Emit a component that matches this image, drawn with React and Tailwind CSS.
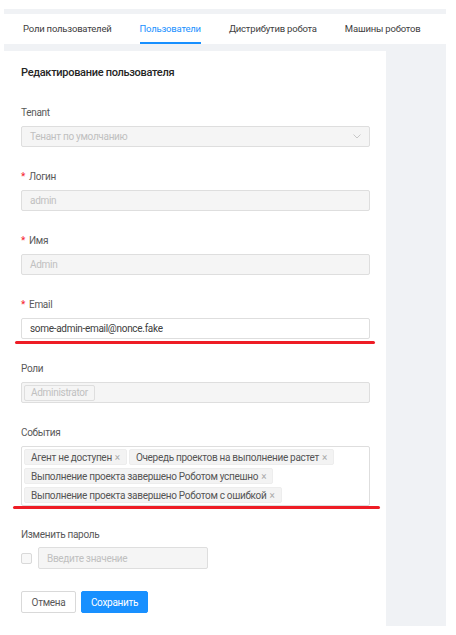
import React from "react";

const font = { fontFamily: 'Roboto, "Noto Sans", sans-serif' };

function Label({ children, required }) {
  return (
    <div className="h-[16px] flex items-center text-[10px] tracking-[-0.3px] text-[#595959] leading-[16px]">
      {required && <span className="text-[#f5222d] mr-[4px] text-[10px]">*</span>}
      {children}
    </div>
  );
}

function Tag({ children }) {
  return (
    <span className="h-[16px] flex items-center px-[6px] bg-[#f3f3f3] border border-[#ededed] rounded-[2px] text-[10px] tracking-[-0.3px] text-[#555555] whitespace-nowrap">
      {children}
      <span className="ml-[3px] text-[#aaaaaa] text-[10px]">×</span>
    </span>
  );
}

export default function App() {
  return (
    <div className="w-[456px] h-[635px] bg-white overflow-hidden" style={font}>
      <div className="ml-[4px] mt-[9px] w-[442px] h-[617px] bg-[#f0f2f5] pt-[5px] flex flex-col">
        <div className="h-[30px] bg-white flex items-stretch pl-[19px] gap-[28px] text-[9.5px] tracking-[-0.2px] text-[#404040] shrink-0 whitespace-nowrap">
          <div className="flex items-center">Роли пользователей</div>
          <div className="flex items-center text-[#1890ff] relative">
            Пользователи
            <div className="absolute left-0 right-0 bottom-0 h-[2px] bg-[#1890ff]" />
          </div>
          <div className="flex items-center">Дистрибутив робота</div>
          <div className="flex items-center">Машины роботов</div>
        </div>
        <div className="mt-[7px] w-[382px] flex-1 bg-white pl-[17px] pr-[16px] pt-[13px] relative">
          <div className="h-[18px] flex items-center text-[11px] tracking-[-0.3px] font-medium text-[#262626]">
            Редактирование пользователя
          </div>

          <div className="mt-[23px]">
            <Label>Tenant</Label>
            <div className="mt-[5px] h-[21px] bg-[#f5f5f5] border border-[#dedede] rounded-[2px] flex items-center justify-between px-[8px] text-[10px] tracking-[-0.3px] text-[#c0c0c0]">
              <span>Тенант по умолчанию</span>
              <svg width="8" height="5" viewBox="0 0 8 5" fill="none">
                <path d="M0.5 0.5 L4 4 L7.5 0.5" stroke="#c8c8c8" strokeWidth="1" />
              </svg>
            </div>
          </div>

          <div className="mt-[22px]">
            <Label required>Логин</Label>
            <div className="mt-[5px] h-[21px] bg-[#f5f5f5] border border-[#dedede] rounded-[2px] flex items-center px-[8px] text-[10px] tracking-[-0.3px] text-[#c0c0c0]">
              admin
            </div>
          </div>

          <div className="mt-[22px]">
            <Label required>Имя</Label>
            <div className="mt-[5px] h-[21px] bg-[#f5f5f5] border border-[#dedede] rounded-[2px] flex items-center px-[8px] text-[10px] tracking-[-0.3px] text-[#c0c0c0]">
              Admin
            </div>
          </div>

          <div className="mt-[22px]">
            <Label required>Email</Label>
            <div className="mt-[5px] h-[21px] bg-white border border-[#dedede] rounded-[2px] flex items-center px-[8px] text-[10px] tracking-[-0.3px] text-[#404040]">
              some-admin-email@nonce.fake
            </div>
          </div>

          <div className="mt-[22px]">
            <Label>Роли</Label>
            <div className="mt-[5px] h-[21px] bg-[#f5f5f5] border border-[#dedede] rounded-[2px] flex items-center px-[2px] text-[10px] tracking-[-0.3px] text-[#c0c0c0]">
              <span className="h-[16px] flex items-center px-[6px] border border-[#dedede] rounded-[2px] bg-[#f5f5f5]">
                Administrator
              </span>
            </div>
          </div>

          <div className="mt-[22px]">
            <Label>События</Label>
            <div className="mt-[5px] bg-white border border-[#dedede] rounded-[2px] px-[2px] pt-[2px] pb-[2px] flex flex-col gap-[3px]">
              <div className="flex gap-[2px]">
                <Tag>Агент не доступен</Tag>
                <Tag>Очередь проектов на выполнение растет</Tag>
              </div>
              <div className="flex">
                <Tag>Выполнение проекта завершено Роботом успешно</Tag>
              </div>
              <div className="flex">
                <Tag>Выполнение проекта завершено Роботом с ошибкой</Tag>
              </div>
            </div>
          </div>

          <div className="mt-[21px]">
            <Label>Изменить пароль</Label>
            <div className="mt-[4px] flex items-center gap-[6px]">
              <div className="w-[11px] h-[11px] border border-[#d9d9d9] rounded-[2px] bg-[#f8f8f8]" />
              <div className="w-[170px] h-[22px] bg-[#f5f5f5] border border-[#dedede] rounded-[2px] flex items-center px-[8px] text-[10px] tracking-[-0.3px] text-[#c0c0c0]">
                Введите значение
              </div>
            </div>
          </div>

          <div className="mt-[22px] flex gap-[5px]">
            <button className="w-[55px] h-[22px] bg-white border border-[#d9d9d9] rounded-[2px] text-[10px] tracking-[-0.3px] text-[#595959]">
              Отмена
            </button>
            <button className="w-[67px] h-[22px] bg-[#1890ff] border border-[#1890ff] rounded-[2px] text-[10px] tracking-[-0.3px] text-white">
              Сохранить
            </button>
          </div>

          <div className="absolute left-[11px] top-[290px] w-[360px] h-[3px] rounded-full bg-[#ee1c25]" />
          <div className="absolute left-[9px] top-[455px] w-[367px] h-[3px] rounded-full bg-[#ee1c25]" />
        </div>
      </div>
    </div>
  );
}
